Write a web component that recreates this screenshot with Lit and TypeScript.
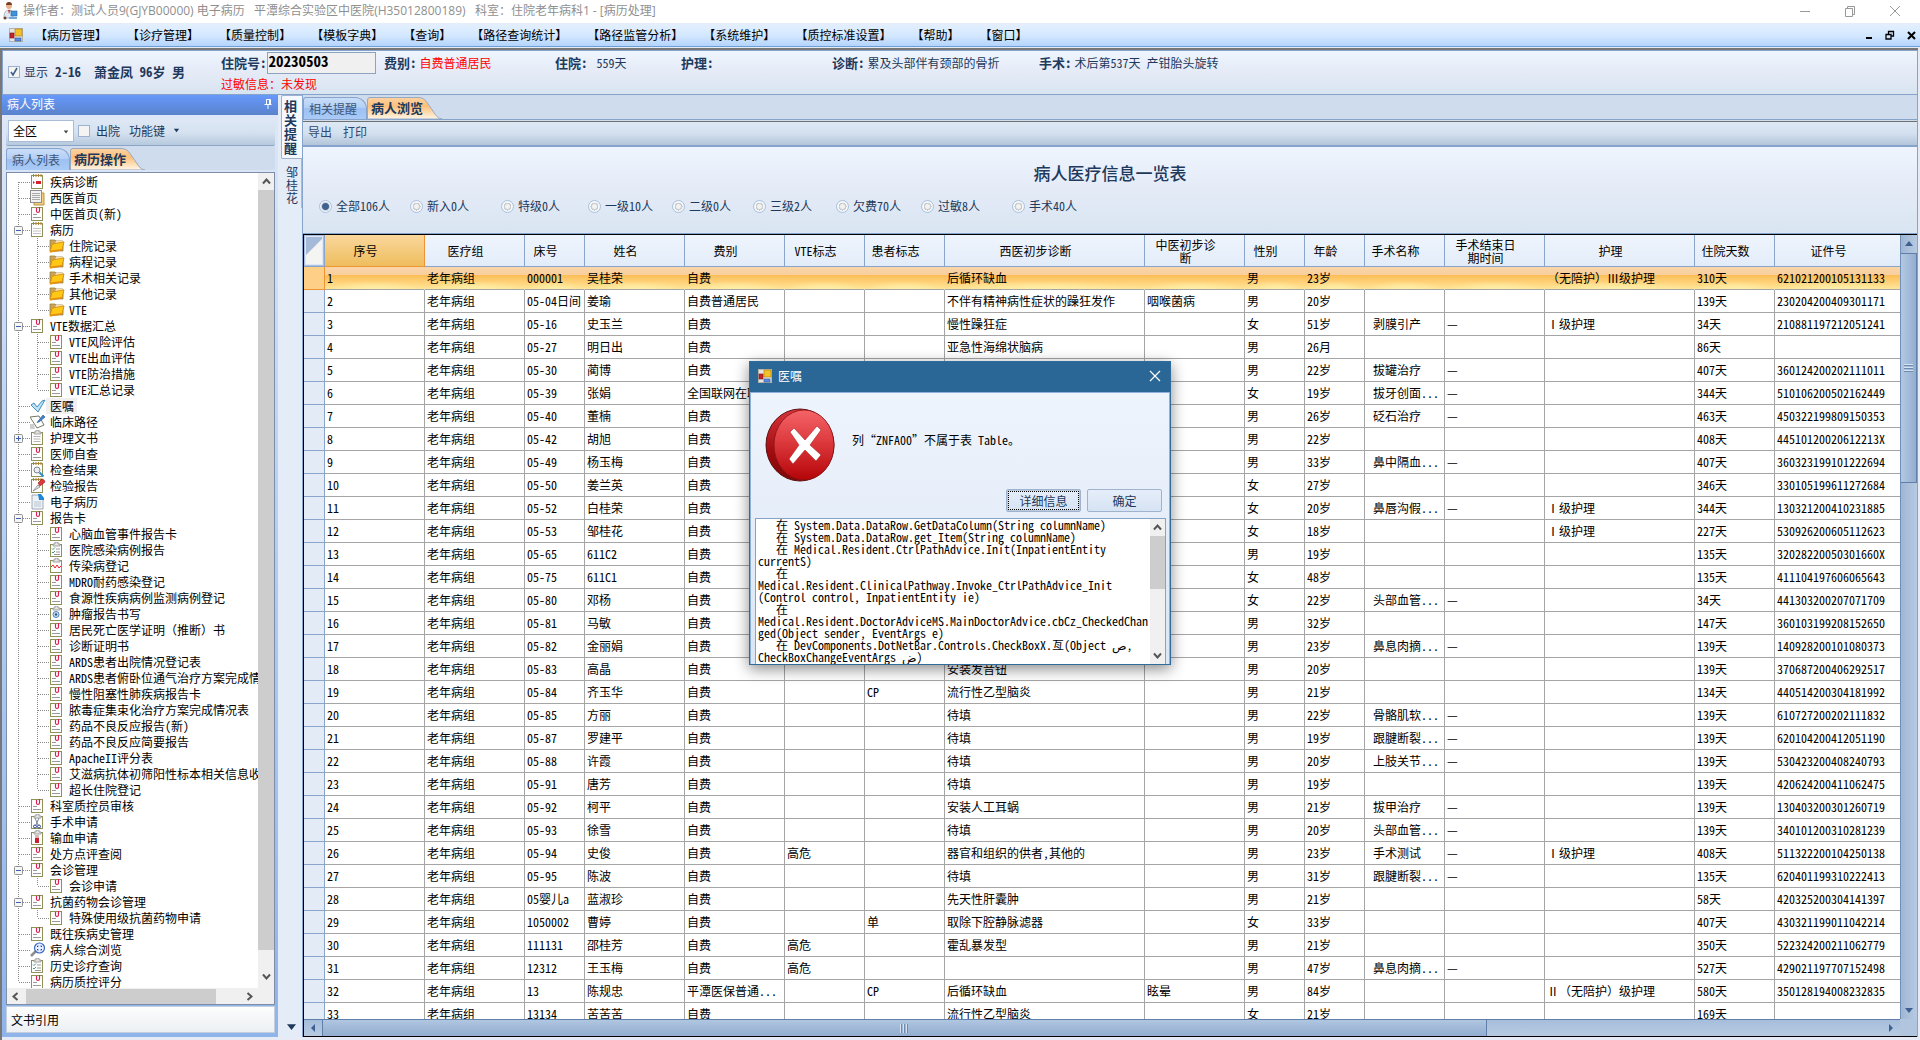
import { LitElement, html, css, svg, nothing } from "lit";
import { customElement, property, state } from "lit/decorators.js";
import { classMap } from "lit/directives/class-map.js";

const base = css`
  * { box-sizing: border-box; }
  button, input, select, textarea {
    font: inherit;
    color: inherit;
    margin: 0;
    padding: 0;
    border: 0;
    border-radius: 0;
    background: none;
    appearance: none;
    font-feature-settings: inherit;
    outline: none;
  }
  ul, h1, h2, p { margin: 0; padding: 0; font: inherit; list-style: none; }
  svg { display: block; flex: none; }
  .wide { font-feature-settings: normal; }
  input[type="radio"] {
    width: 13px;
    height: 13px;
    flex: none;
    border-radius: 50%;
    border: 1px solid #a9c1de;
    background: radial-gradient(circle, #f2f2f0 0 2px, #c9cdd2 3px 4px, #f4f6f8 4px);
  }
  input[type="radio"]:checked {
    background: radial-gradient(circle, #3f6290 0 3px, #c9d3df 4px, #f4f6f8 5px);
  }
`;

/* Full-width punctuation keeps its full advance; plain Latin stays half-width. */
const isWide = (t: string) => /[（）—]/.test(t);

/* ---------- icons ---------- */

const sheet = svg`<rect x="1.5" y="1.5" width="11" height="13" fill="#fff" stroke="#8f9257"/>`;
const board = svg`<rect x="1.5" y="2.5" width="11" height="12" fill="#fff" stroke="#8f9257"/>
  <path d="M4 4V2h2V0h3v2h2v2z" fill="#e4e4e4" stroke="#909090" stroke-width=".8"/>`;
const rings = svg`<path d="M3.5 0v3M6 0v3M8.5 0v3M11 0v3" stroke="#b5812e"/>`;

const icons: Record<string, unknown> = {
  clip: svg`${sheet}<path d="M3 8.500h4M3 11.500h8" stroke="#9a9a9a"/>
    <path d="M6.500 2v3q0 1.500 1.500 1.500t1.500-1.500V1" stroke="#dd1f55" fill="none" stroke-width="1.200"/>`,
  diag: svg`${sheet}${rings}<rect x="6" y="7" width="5" height="3" fill="#d6202c"/><path d="M3 7l2 1.500L3 10z" fill="#d6202c"/>`,
  pages: svg`<path d="M4 3h10v12H4z" fill="#f3cf7c" stroke="#b89545"/><rect x=".5" y=".5" width="11" height="12" fill="#f2f2f2" stroke="#8d8d8d"/>
    <path d="M2 3.500h8M2 5.500h8M2 7.500h8M2 9.500h8" stroke="#a9a9a9"/>`,
  note: svg`${sheet}${rings}<path d="M3 6.500h8M3 9h8M3 11.500h8" stroke="#c4c4c4"/>`,
  folder: svg`<path d="M1 2h5l1 1h7v10H1z" fill="#c9a45a" stroke="#9a8040" stroke-width=".8"/><path d="M7 3h7v3H6z" fill="#f5dfb0"/>
    <path d="M3 6l12-2-2 8-12 2z" fill="#ffc814" stroke="#c98a10" stroke-width=".8"/><path d="M1.500 12.500l11.500-1.500-.5 1.500L1 14.500z" fill="#e89010"/>`,
  check: svg`<path d="M1 7l3-2 3 4 5-6 3-1-7 12z" fill="#bfe2f5" stroke="#3f8fbf"/>`,
  path: svg`<path d="M0 3l9-1 5 9-7 3z" fill="#fff" stroke="#777762"/><path d="M0 10h4l1 5H0z" fill="#cfcfcf"/>
    <path d="M13 1l2 2-6 5-2 .5z" fill="#3f83d6" stroke="#24508c" stroke-width=".6"/>`,
  board: svg`${board}<path d="M3.500 6.500h7M3.500 9h7M3.500 11.500h7" stroke="#b5b5b5"/>`,
  find: svg`${sheet}${rings}<circle cx="7" cy="8" r="3" fill="#e8eef2" stroke="#7e8890"/><path d="M9.500 10.500l4 4" stroke="#2d8fd0" stroke-width="2"/>`,
  pen: svg`${sheet}${rings}<path d="M3 13l5-6 2 2z" fill="#dfe6ea" stroke="#777" stroke-width=".7"/><path d="M8 5l4-4 2 1 1 2-5 4z" fill="#e2383c" stroke="#8e1418" stroke-width=".6"/>`,
  page: svg`<path d="M2 1h7l4 4v10H2z" fill="#eef3f8" stroke="#8a949e" stroke-width=".8"/><path d="M8 0h3l3 4v2H9z" fill="#1f86de"/><path d="M4 8h7M4 10h7M4 12h7" stroke="#aab8c8" stroke-width=".8"/>`,
  list: svg`${board}<path d="M3 6.500l1 1 2-2M3 10l1 1 2-2" stroke="#3f9a80" fill="none"/><path d="M7 7h4M7 10h4M5 12.500h6" stroke="#9a9a9a"/>`,
  chart: svg`${board}<path d="M2 9l2-2 2 3 2-3 2 3 2-2" stroke="#e8202c" fill="none"/>`,
  tumor: svg`${board}<circle cx="7" cy="8.500" r="3" fill="#cfe2f4" stroke="#4a80b8"/><circle cx="7" cy="8.500" r="1.200" fill="#24578f"/>`,
  knife: svg`${board}<path d="M5 4l3 7M9 4l-3 7" stroke="#7c8896"/><circle cx="5" cy="12.500" r="1.500" fill="none" stroke="#2a3d8a"/><circle cx="9" cy="12.500" r="1.500" fill="none" stroke="#2a3d8a"/>`,
  blood: svg`${board}<rect x="5" y="5" width="4" height="3" fill="#d8b8b4"/><rect x="5" y="8" width="4" height="5" fill="#c8202c"/>`,
  lens: svg`<path d="M1 14l5-5" stroke="#8e8e8e" stroke-width="2.500"/><circle cx="9.500" cy="6" r="5" fill="#e6f0ff" stroke="#3a68c0" stroke-width="1.200"/>
    <path d="M7.500 5V4h1M10.500 4h1v1M7.500 7v1h1M10.500 8h1V7" stroke="#2236b8" fill="none"/>`,
};

const icon = (name: string) => svg`<svg width="16" height="16" viewBox="0 0 16 16">${icons[name]}</svg>`;

const formIcon = html`<svg width="14" height="14" viewBox="0 0 14 14">
  <rect x=".5" y=".5" width="13" height="13" fill="#e4e4e4" stroke="#b9b2a6" />
  <rect x="6" y="1" width="7" height="7" fill="#f3c12a" stroke="#a97d10" stroke-width=".6" />
  <rect x="1" y="5" width="4" height="5" fill="#c4262c" stroke="#7c1014" stroke-width=".6" />
  <rect x="6" y="10" width="6" height="3" fill="#5a8ce0" stroke="#2c54a0" stroke-width=".6" />
</svg>`;

const arrow = (d: string, color: string, w = 8, h = 8) =>
  html`<svg width=${w} height=${h} viewBox="0 0 8 8"><path d=${d} fill=${color} /></svg>`;
const chevron = (d: string) =>
  html`<svg width="9" height="9" viewBox="0 0 9 9"><path d=${d} fill="none" stroke="#555" stroke-width="2" /></svg>`;

/* ---------- slanted tab strip ---------- */

@customElement("tab-strip")
class TabStrip extends LitElement {
  @property({ attribute: false }) tabs: string[] = [];
  @state() private current = 1;
  static styles = [base, css`
    :host { display: flex; align-items: flex-end; }
    button { height: 22px; padding: 0 4px 0 5px; text-align: left; color: #3c5577; line-height: 20px; white-space: nowrap; }
    .off {
      width: 64px;
      border: 1px solid #86a3cc;
      border-bottom: 0;
      border-radius: 3px 12px 0 0;
      background: linear-gradient(#c9ddf8, #b4d0f6 45%, #9dc1f2 50%, #a9caf6);
    }
    .on { position: relative; width: 76px; font-size: 13px; font-weight: 700; color: #1e395b; padding-left: 4px; }
    .on svg { position: absolute; inset: 0; }
    .on span { position: relative; }
  `];
  render() {
    return this.tabs.map((t, i) => i === this.current
      ? html`<button class="on" role="tab" aria-selected="true">
          <svg width="76" height="22" viewBox="0 0 76 22">
            <defs><linearGradient id="g" x1="0" y1="0" x2="0" y2="1">
              <stop offset="0" stop-color="#fcd3a3" /><stop offset=".4" stop-color="#fdc07a" />
              <stop offset=".75" stop-color="#fee0b8" /><stop offset="1" stop-color="#fff6ea" />
            </linearGradient></defs>
            <path d="M.5 22V3q0-2.500 2.500-2.500h48q6 0 9 5l9 13q2 3 6 3.500z" fill="url(#g)" stroke="#9aa9bd" />
          </svg><span>${t}</span></button>`
      : html`<button class="off" role="tab" aria-selected="false" @click=${() => (this.current = i)}>${t}</button>`);
  }
}

/* ---------- navigation tree ---------- */

type Node = [icon: string, label: string, children?: Node[], closed?: boolean];
const c = (...labels: string[]): Node[] => labels.map((l) => ["clip", l] as Node);
const f = (...labels: string[]): Node[] => labels.map((l) => ["folder", l] as Node);

const tree: Node[] = [
  ["diag", "疾病诊断"], ["pages", "西医首页"], ["clip", "中医首页(新)"],
  ["note", "病历", f("住院记录", "病程记录", "手术相关记录", "其他记录", "VTE")],
  ["clip", "VTE数据汇总", c("VTE风险评估", "VTE出血评估", "VTE防治措施", "VTE汇总记录")],
  ["check", "医嘱"], ["path", "临床路径"], ["board", "护理文书", [], true], ["clip", "医师自查"],
  ["find", "检查结果"], ["pen", "检验报告"], ["page", "电子病历"],
  ["clip", "报告卡", [
    ...c("心脑血管事件报告卡"), ["list", "医院感染病例报告"], ["chart", "传染病登记"],
    ...c("MDRO耐药感染登记", "食源性疾病病例监测病例登记"), ["tumor", "肿瘤报告书写"],
    ...c("居民死亡医学证明（推断）书", "诊断证明书", "ARDS患者出院情况登记表", "ARDS患者俯卧位通气治疗方案完成情",
      "慢性阻塞性肺疾病报告卡", "脓毒症集束化治疗方案完成情况表", "药品不良反应报告(新)", "药品不良反应简要报告",
      "ApacheII评分表", "艾滋病抗体初筛阳性标本相关信息收", "超长住院登记"),
  ]],
  ["clip", "科室质控员审核"], ["knife", "手术申请"], ["blood", "输血申请"], ["clip", "处方点评查阅"],
  ["clip", "会诊管理", c("会诊申请")], ["clip", "抗菌药物会诊管理", c("特殊使用级抗菌药物申请")],
  ["clip", "既往疾病史管理"], ["lens", "病人综合浏览"], ["list", "历史诊疗查询"], ["clip", "病历质控评分"],
];

const branch = (first: boolean, last: boolean, box = "") => svg`
  <svg width="23" height="16" viewBox="0 0 23 16">
    <path d="M11.5 ${first ? 8 : 0}V${last ? 8 : 16}M12 8.500h11" stroke="#8a8a8a" stroke-dasharray="1 1" fill="none"/>
    ${box ? svg`<rect x="7.500" y="4.500" width="8" height="8" rx="1" fill="#f6f6f6" stroke="#8f8f8f"/>
      <path d=${box === "+" ? "M9 8.500h5M11.500 6v5" : "M9 8.500h5"} stroke="#3a5fae"/>` : nothing}
  </svg>`;
const trunk = svg`<svg width="19" height="16" viewBox="0 0 19 16"><path d="M11.500 0V16" stroke="#8a8a8a" stroke-dasharray="1 1"/></svg>`;

@customElement("record-tree")
class RecordTree extends LitElement {
  static styles = [base, css`
    :host { display: grid; grid-template: minmax(0, 1fr) 16px / minmax(0, 1fr) 16px; border: 1px solid #7d8ea6; background: #fff; overflow: hidden; }
    .list { overflow: hidden; padding-top: 1px; color: #000; line-height: 16px; white-space: nowrap; }
    .row { display: flex; height: 16px; }
    .row span { padding: 0 3px 0 4px; }
    .sel { background: #f0f0f0; }
    .v { display: flex; flex-direction: column; align-items: center; background: #f0f0f0; padding-bottom: 3px; }
    .v div { width: 100%; flex: 1; background: #cdcdcd; margin-bottom: 18px; }
    .v svg { margin: 4px 0; }
    .h { display: flex; align-items: center; background: #f0f0f0; padding-left: 4px; }
    .h div { width: 190px; height: 15px; margin: 0 auto 0 2px; background: #cdcdcd; }
    .end { background: #f0f0f0; }
    .h svg { margin-right: 4px; }
  `];
  private rows(nodes: Node[], deep = false): unknown {
    return nodes.map(([ic, label, kids, closed], i) => html`<li>
      <div class="row">${deep ? trunk : nothing}${branch(!deep && i === 0, i === nodes.length - 1, kids ? (closed ? "+" : "-") : "")}
        ${icon(ic)}<span class=${classMap({ sel: label === "医嘱", wide: isWide(label) })}>${label}</span></div>
      ${kids?.length ? html`<ul>${this.rows(kids, true)}</ul>` : nothing}
    </li>`);
  }
  render() {
    return html`<ul class="list">${this.rows(tree)}</ul>
      <div class="v">${chevron("M1 6.500l3.500-4 3.500 4")}<div></div>${chevron("M1 2.500l3.500 4 3.500-4")}</div>
      <div class="h">${chevron("M6.500 1l-4 3.500 4 3.500")}<div></div>${chevron("M2.500 1l4 3.500-4 3.500")}</div>
      <div class="end"></div>`;
  }
}

/* ---------- patient grid ---------- */

const columns: [string, number][] = [
  ["序号", 100], ["医疗组", 100], ["床号", 60], ["姓名", 100], ["费别", 100], ["VTE标志", 80], ["患者标志", 80],
  ["西医初步诊断", 200], ["中医初步诊断", 100], ["性别", 60], ["年龄", 60], ["手术名称", 80], ["手术结束日期时间", 100],
  ["护理", 150], ["住院天数", 80], ["证件号", 0],
];

/* bed | name | fee | VTE | flag | western | tcm | sex | age | operation | nursing | days | id */
const patients = `
000001|吴桂荣|自费|||后循环缺血||男|23岁||（无陪护）Ⅲ级护理|310天|621021200105131133
05-04日间|姜瑜|自费普通居民|||不伴有精神病性症状的躁狂发作|咽喉菌病|男|20岁|||139天|230204200409301171
05-16|史玉兰|自费|||慢性躁狂症||女|51岁|剥膜引产|Ⅰ级护理|34天|210881197212051241
05-27|明日出|自费|||亚急性海绵状脑病||男|26月|||86天|
05-30|蔺博|自费|||||男|22岁|拔罐治疗||407天|360124200202111011
05-39|张娟|全国联网在职|||||女|19岁|拔牙创面...||344天|510106200502162449
05-40|董楠|自费|||||男|26岁|砭石治疗||463天|450322199809150353
05-42|胡旭|自费|||||男|22岁|||408天|44510120020612213X
05-49|杨玉梅|自费|||||男|33岁|鼻中隔血...||407天|360323199101222694
05-50|姜兰英|自费|||||女|27岁|||346天|330105199611272684
05-52|白桂荣|自费|||||女|20岁|鼻唇沟假...|Ⅰ级护理|344天|130321200410231885
05-53|邹桂花|自费|||||女|18岁||Ⅰ级护理|227天|530926200605112623
05-65|611C2|自费|||||男|19岁|||135天|32028220050301660X
05-75|611C1|自费|||||女|48岁|||135天|411104197606065643
05-80|邓杨|自费|||||女|22岁|头部血管...||34天|441303200207071709
05-81|马敏|自费|||||男|32岁|||147天|360103199208152650
05-82|金丽娟|自费|||||男|23岁|鼻息肉摘...||139天|140928200101080373
05-83|高晶|自费|||安装发音钮||男|20岁|||139天|370687200406292517
05-84|齐玉华|自费||CP|流行性乙型脑炎||男|21岁|||134天|440514200304181992
05-85|方丽|自费|||待填||男|22岁|骨骼肌软...||139天|610727200202111832
05-87|罗建平|自费|||待填||男|19岁|跟腱断裂...||139天|620104200412051190
05-88|许霞|自费|||待填||男|20岁|上肢关节...||139天|530423200408240793
05-91|唐芳|自费|||待填||男|19岁|||139天|420624200411062475
05-92|柯平|自费|||安装人工耳蜗||男|21岁|拔甲治疗||139天|130403200301260719
05-93|徐雪|自费|||待填||男|20岁|头部血管...||139天|340101200310281239
05-94|史俊|自费|高危||器官和组织的供者,其他的||男|23岁|手术测试|Ⅰ级护理|408天|511322200104250138
05-95|陈波|自费|||待填||男|31岁|跟腱断裂...||135天|620401199310222413
05婴儿a|蓝淑珍|自费|||先天性肝囊肿||男|21岁|||58天|420325200304141397
1050002|曹婷|自费||单|取除下腔静脉滤器||女|33岁|||407天|430321199011042214
111131|邵桂芳|自费|高危||霍乱暴发型||男|21岁|||350天|522324200211062779
12312|王玉梅|自费|高危||||男|47岁|鼻息肉摘...||527天|429021197707152498
13|陈规忠|平潭医保普通...||CP|后循环缺血|眩晕|男|84岁||Ⅱ（无陪护）级护理|580天|350128194008232835
13134|苦苦苦|自费|||流行性乙型脑炎||女|21岁|||169天|`
  .trim().split("\n").map((l) => l.split("|"));

@customElement("patient-grid")
class PatientGrid extends LitElement {
  static styles = [base, css`
    :host { display: grid; grid-template: minmax(0, 1fr) 17px / minmax(0, 1fr) 17px; border: 1px solid #000; border-right: 0; overflow: hidden; background: #fff; color: #000; }
    .view { overflow: hidden; }
    table { width: 100%; table-layout: fixed; border-collapse: separate; border-spacing: 0; line-height: 14px; }
    col.mark { width: 21px; }
    th { height: 32px; padding: 0 18px 0 0; font-weight: 400; line-height: 13px; white-space: nowrap;
      border-right: 1px solid #8aa5cb; border-bottom: 1px solid #8aa5cb; background: linear-gradient(#eff5fd, #e2ecf9); }
    th.sorted { background: linear-gradient(#f9d79c, #eebd5d); border-color: #ef9432; }
    th.corner { padding: 0; background: #a9bfdd; }
    td { height: 23px; padding: 0 0 0 2px; white-space: nowrap; overflow: hidden; border-right: 1px solid #a5a5a5; border-bottom: 1px solid #a5a5a5; }
    td:first-child { background: #e3ebf7; border-color: #8aa5cb; padding: 0; }
    td:last-child, th:last-child { border-right: 0; }
    td.op { padding-left: 8px; }
    .cur td {
      border-right-color: transparent;
      background-clip: border-box;
      background: radial-gradient(ellipse 50% 8px at 50% 100%, #fff0a8, #ffe99a00),
        linear-gradient(#f9d5a8, #f9cf9e 36%, #fcbd57 38%, #ffd27a 70%, #ffe596);
    }
    .cur td:first-child { background: #fdcf87; border-color: #ef9432; }
    .v { display: flex; flex-direction: column; align-items: center; background: linear-gradient(90deg, #9fb6d4, #b7cae2); border-left: 1px solid #6f8fb8; }
    .v svg { margin: 5px 0; }
    .vt { width: 100%; height: 230px; margin-bottom: auto; border: 1px solid #5f7fa8; border-left: 0; background: linear-gradient(90deg, #b3c8e2, #93aed0); display: flex; justify-content: center; align-items: center; }
    .h { display: flex; align-items: center; background: linear-gradient(#a6bedb, #b7cae2); border-top: 1px solid #5f7fa8; }
    .h svg { margin: 0 5px; }
    .ht { width: 73%; height: 100%; margin-right: auto; border-right: 1px solid #5f7fa8; border-left: 1px solid #5f7fa8; background: linear-gradient(#b0c6e1, #92adcf); display: flex; justify-content: center; align-items: center; }
    .grip { width: 9px; height: 9px; background: repeating-linear-gradient(#d7e2f0 0 1px, #6f8bb0 1px 2px, transparent 2px 3px); }
    .ht .grip { background: repeating-linear-gradient(90deg, #d7e2f0 0 1px, #6f8bb0 1px 2px, transparent 2px 3px); }
    .end { background: #b1c5de; }
  `];
  render() {
    return html`<div class="view"><table>
        <colgroup><col class="mark" />${columns.map(([, w]) => html`<col style=${w ? `width:${w}px` : ""} />`)}</colgroup>
        <thead><tr><th class="corner"><svg width="20" height="31" viewBox="0 0 20 31">
            <rect x="1.500" y="1.500" width="17" height="28" fill="#a5bad8" stroke="#dfe8f4" /><path d="M18 4v25H2V20z" fill="#f4f4f2" /></svg></th>
          ${columns.map(([t], i) => html`<th class=${classMap({ sorted: i === 0 })} scope="col">${i === 8 || i === 12 ? html`${t.slice(0, 5)}<br />${t.slice(5)}` : t}</th>`)}
        </tr></thead>
        <tbody>${patients.map((p, i) => html`<tr class=${classMap({ cur: i === 0 })}>
          <td></td><td>${i + 1}</td><td>老年病组</td>${p.slice(0, 9).map((v) => html`<td>${v}</td>`)}
          <td class="op">${p[9]}</td><td class="wide">${p[9] ? "—" : ""}</td><td class="wide">${p[10]}</td>${p.slice(11).map((v) => html`<td>${v}</td>`)}
        </tr>`)}</tbody>
      </table></div>
      <div class="v">${arrow("M0 6h8L4 1z", "#3f5f92")}<div class="vt"><div class="grip"></div></div>${arrow("M0 2h8L4 7z", "#3f5f92")}</div>
      <div class="h">${arrow("M6 0v8L2 4z", "#3f5f92")}<div class="ht"><div class="grip"></div></div>${arrow("M2 0v8l4-4z", "#3f5f92")}</div>
      <div class="end"></div>`;
  }
}

/* ---------- error dialog ---------- */

const trace = [
  "   在 System.Data.DataRow.GetDataColumn(String columnName)",
  "   在 System.Data.DataRow.get_Item(String columnName)",
  "   在 Medical.Resident.CtrlPathAdvice.Init(InpatientEntity",
  "currentS)",
  "   在",
  "Medical.Resident.ClinicalPathway.Invoke_CtrlPathAdvice_Init",
  "(Control control, InpatientEntity ie)",
  "   在",
  "Medical.Resident.DoctorAdviceMS.MainDoctorAdvice.cbCz_CheckedChan",
  "ged(Object sender, EventArgs e)",
  "   在 DevComponents.DotNetBar.Controls.CheckBoxX.亙(Object ص,",
  "CheckBoxChangeEventArgs ض)",
].join("\n");

@customElement("error-dialog")
class ErrorDialog extends LitElement {
  static styles = [base, css`
    :host { display: flex; flex-direction: column; width: 422px; height: 304px; border: 1px solid #2f6c9c; background: linear-gradient(#f0f6fe, #e4ecf8 60%, #dbe6f4); box-shadow: 0 4px 14px #0007; color: #000; }
    header { display: flex; align-items: center; gap: 6px; height: 30px; padding: 0 8px 2px; background: #2a6796; color: #fff; }
    header h2 { flex: 1; }
    .body { flex: 1; display: flex; flex-direction: column; border: solid #8fb0d8; border-width: 1px 1px 0; padding: 0 3px 0 4px; }
    .msg { display: flex; align-items: center; gap: 16px; height: 96px; padding: 7px 0 0 9px; }
    .msg p { padding-bottom: 10px; }
    .buttons { display: flex; justify-content: flex-end; gap: 6px; padding: 0 4px 6px; }
    .buttons button { width: 75px; height: 23px; border: 1px solid #9fb3cf; border-radius: 2px; background: linear-gradient(#e6eefa, #d6e3f3); color: #1e395b; line-height: 19px; }
    .buttons .focus { border-width: 1px; box-shadow: inset 0 0 0 1px #b9c9de; outline: 1px dotted #000; outline-offset: -3px; }
    .trace { flex: 1; display: flex; min-height: 0; border: 1px solid #86a2c6; border-bottom: 0; background: #fff; }
    textarea { flex: 1; min-width: 0; resize: none; overflow: hidden; white-space: pre; padding: 0 0 0 2px; line-height: 12px; }
    .bar { width: 15px; display: flex; flex-direction: column; align-items: center; justify-content: space-between; background: #f0f0f0; padding: 4px 0; }
    .bar div { width: 15px; height: 53px; margin: 4px 0 auto; background: #cdcdcd; }
  `];
  render() {
    return html`
      <header>${formIcon}<h2>医嘱</h2><button aria-label="关闭"><svg width="14" height="14" viewBox="0 0 14 14"><path d="M2 2l10 10M12 2L2 12" stroke="#fff" stroke-width="1.200" /></svg></button></header>
      <div class="body">
        <div class="msg">
          <svg width="72" height="76" viewBox="0 0 72 76">
            <defs>
              <linearGradient id="rim" x1="0" y1="0" x2="0" y2="1"><stop offset="0" stop-color="#d8343a" /><stop offset=".6" stop-color="#a00c10" /><stop offset="1" stop-color="#7c0808" /></linearGradient>
              <linearGradient id="face" x1="0" y1="0" x2="0" y2="1"><stop offset="0" stop-color="#f46468" /><stop offset=".45" stop-color="#dd3a3e" /><stop offset="1" stop-color="#b40408" /></linearGradient>
            </defs>
            <ellipse cx="36" cy="38" rx="34" ry="36" fill="url(#rim)" stroke="#5c1010" />
            <ellipse cx="40" cy="38" rx="30" ry="35" fill="url(#face)" stroke="#8c1216" stroke-width=".8" />
            <path d="M30 21l11 12 12-14 4 4-11 15 11 10-5 6-11-11-12 14-4-5 10-14-9-13z" fill="#fff" stroke="#b02024" stroke-width=".6" />
          </svg>
          <p>列“ZNFA00”不属于表 Table。</p>
        </div>
        <div class="buttons"><button class="focus">详细信息</button><button>确定</button></div>
        <div class="trace"><textarea readonly aria-label="详细信息" .value=${trace}></textarea>
          <div class="bar">${chevron("M1 6.500l3.500-4 3.500 4")}<div></div>${chevron("M1 2.500l3.500 4 3.500-4")}</div></div>
      </div>`;
  }
}

/* ---------- application ---------- */

const menus = ["病历管理", "诊疗管理", "质量控制", "模板字典", "查询", "路径查询统计", "路径监管分析", "系统维护", "质控标准设置", "帮助", "窗口"];
const filters = ["全部106人", "新入0人", "特级0人", "一级10人", "二级0人", "三级2人", "欠费70人", "过敏8人", "手术40人"];

@customElement("app-root")
class AppRoot extends LitElement {
  static styles = [base, css`
    :host {
      display: flex; flex-direction: column; position: relative; height: 100vh; min-width: 1200px; overflow: hidden;
      background: #e6ebf5; color: #1e395b;
      font: 12px/16px "Noto Sans CJK SC", "DejaVu Sans", sans-serif;
      font-feature-settings: "hwid";
    }
    .title { display: flex; align-items: center; gap: 5px; height: 23px; padding: 0 19px 1px 2px; background: #fff; color: #8f8f8f; font-family: "Open Sans", "Noto Sans CJK SC", sans-serif; font-feature-settings: normal; }
    .title h1 { flex: 1; white-space: pre; }
    .title .wins { display: flex; gap: 33px; }
    .menu { display: flex; align-items: center; height: 24px; padding: 0 4px 0 9px; background: linear-gradient(#e6edfa, #dfeeff 20%, #d3e7ff 55%, #b4d4fd); border-bottom: 1px solid #6c9fd6; color: #000; }
    .menu nav { flex: 1; display: flex; padding-left: 2px; }
    .menu nav button { padding: 0 10px; }
    .mdi { display: flex; gap: 12px; align-items: center; }
    .client { flex: 1; min-height: 0; display: flex; flex-direction: column; padding-bottom: 3px; margin: 1px 2px 0 0; border: solid #777; border-width: 2px 0 0 2px; }

    .info { display: grid; grid-template-columns: 218px 163px 171px 126px 151px 207px 1fr; grid-template-rows: 23px 19px; align-content: start; align-items: center; height: 45px; border: 1px solid #86a3cc; background: linear-gradient(#eef5fd, #e4ebf7 50%, #d9e4f1); white-space: nowrap; }
    .who { grid-row: 1 / 3; display: flex; align-items: center; padding: 0 0 0 5px; font-size: 13px; font-weight: 700; gap: 13px; }
    .who label { display: flex; align-items: center; gap: 4px; font-size: 12px; font-weight: 400; margin-right: -6px; }
    .who .rest { white-space: pre; }
    .f { display: flex; align-items: center; gap: 3px; }
    .f span { white-space: pre; }
    .f b, .f label { font-size: 13px; font-weight: 700; }
    .f input { width: 109px; height: 22px; margin-left: -3px; padding: 0 1px 4px; border: 1px solid #8ea3c2; background: #f0f0f0; color: #000; font-size: 15px; font-weight: 700; }
    .red { color: #f00; }
    input[type="checkbox"] { width: 12px; height: 12px; border: 1px solid #9db2cf; background: #f4f4f2; }
    .tick { position: relative; display: flex; }
    .tick svg { position: absolute; inset: 1px; }

    .work { flex: 1; min-height: 0; display: flex; }
    .side { width: 276px; display: flex; flex-direction: column; background: linear-gradient(#dfe8f7, #b9d2f7 40%, #8fb4ea); }
    .side header { display: flex; align-items: center; justify-content: space-between; height: 20px; padding: 0 5px 2px; background: linear-gradient(#6699fb, #5a82cc); color: #fff; }
    .pad { flex: 1; min-height: 0; display: flex; flex-direction: column; padding: 3px 3px 2px 4px; }
    .tools { display: flex; align-items: center; height: 28px; padding: 0 2px 2px; border-bottom: 1px solid #8ca5c6; border-radius: 2px; background: linear-gradient(#dfe9f6, #d5e1ef 55%, #b6c9de); }
    .pick { position: relative; }
    .pick select { width: 66px; height: 22px; padding: 0 4px; border: 1px solid #a9bdd8; background: #fff; color: #000; }
    .pick svg { position: absolute; right: 5px; top: 9px; }
    .tools label { display: flex; align-items: center; gap: 6px; margin: 0 9px 0 4px; }
    .tools button { display: flex; align-items: center; gap: 8px; }
    .stabs { height: 24px; background: #cfdcee; }
    record-tree { flex: 1; min-height: 0; margin-top: 2px; }
    .quote { height: 27px; padding: 0 4px; border: 1px solid #c3cfdf; background: linear-gradient(#fdfdfd, #eceff3); color: #000; text-align: left; margin: 1px 0 2px; }

    .vtabs { width: 25px; display: flex; flex-direction: column; align-items: flex-end; padding-left: 4px; background: #e4ecf8; border-right: 1px solid #86a3cc; }
    .vtabs button { width: 19px; line-height: 13px; padding: 6px 3px 4px; text-align: center; border-right: 1px solid #a8bcd8; }
    .vtabs .on { width: 21px; height: 64px; padding: 0 5px 0 2px; font-size: 13px; line-height: 14px; font-weight: 700; border: 1px solid #9fb3d0; border-right: 0; background: #f5f9ff; border-radius: 2px 0 0 2px; }
    .vtabs svg { margin: auto 6px 6px; }

    main { flex: 1; min-width: 0; display: flex; flex-direction: column; background: #cfdcee; border-right: 1px solid #86a3cc; }
    .mtabs { height: 25px; border-bottom: 1px solid #86a3cc; }
    .bar { display: flex; align-items: flex-start; gap: 11px; height: 26px; padding: 2px 5px; margin-top: 1px; border-top: 1px solid #707070; border-bottom: 2px solid #86a3cc; background: linear-gradient(#dde8f5, #d3e0ef 50%, #b3c5da); color: #33496b; }
    .head { height: 87px; padding: 14px 0 0; background: linear-gradient(#eef5fe, #e4ebf7 50%, #d9e5f2); border-bottom: 1px solid #86a3cc; }
    .head h2 { font-size: 17px; line-height: 24px; font-weight: 500; text-align: center; }
    .radios { display: grid; grid-template-columns: 91px 91px 87px 84px 81px 83px 85px 91px auto; justify-content: start; padding: 13px 0 0 16px; }
    .radios label { display: flex; align-items: center; gap: 4px; }
    patient-grid { flex: 1; min-height: 0; }
    .overlay { position: absolute; inset: 0 0 14px; display: flex; align-items: center; justify-content: center; }
  `];

  private field(label: string, value: string, red = false) {
    return html`<div class="f"><b>${label}:</b><span class=${classMap({ red })}>${value}</span></div>`;
  }

  render() {
    return html`
      <div class="title">
        <svg width="16" height="18" viewBox="0 0 16 18">
          <circle cx="7" cy="4" r="3" fill="#e8b48e" /><path d="M4 3q0-3 3-3t3 3z" fill="#7a3d22" />
          <path d="M2 15q0-7 5-7 4 0 5 5l-2 3H2z" fill="#dfe8f2" stroke="#8497ad" stroke-width=".6" />
          <path d="M6 8l1 4 1.500-4z" fill="#c43a3a" /><rect x="9" y="9" width="6" height="5" fill="#3f93dc" stroke="#27639c" stroke-width=".6" />
          <path d="M7 15h8v2H7z" fill="#6aa8dd" /><circle cx="3" cy="16" r="1.500" fill="#6d4434" />
        </svg>
        <h1>操作者：测试人员9(GJYB00000) 电子病历   平潭综合实验区中医院(H35012800189)   科室：住院老年病科1 - [病历处理]</h1>
        <div class="wins">
          <svg width="12" height="12" viewBox="0 0 12 12"><path d="M1 6.500h10" stroke="#999" /></svg>
          <svg width="12" height="12" viewBox="0 0 12 12"><path d="M1.500 3.500h7v8h-7zM3.500 3V1.500h7v8H9" fill="none" stroke="#999" /></svg>
          <svg width="12" height="12" viewBox="0 0 12 12"><path d="M1 1l10 10M11 1L1 11" stroke="#999" /></svg>
        </div>
      </div>
      <div class="menu">${formIcon}
        <nav>${menus.map((m) => html`<button>【${m}】</button>`)}</nav>
        <div class="mdi">
          <svg width="9" height="10" viewBox="0 0 9 10"><path d="M2 8h6" stroke="#000" stroke-width="2" /></svg>
          <svg width="10" height="10" viewBox="0 0 10 10"><path d="M1 4.500h5v4.500H1zM3.500 4V1.500h5V6H6M3 1.500h6M.5 4.500h6" fill="none" stroke="#000" stroke-width="1.300" /></svg>
          <svg width="9" height="10" viewBox="0 0 9 10"><path d="M1 2l7 7M8 2L1 9" stroke="#000" stroke-width="2" /></svg>
        </div>
      </div>
      <div class="client">
        <section class="info">
          <div class="who">
            <label><span class="tick"><input type="checkbox" checked /><svg width="10" height="10" viewBox="0 0 10 10"><path d="M2 5l2 3 4-7" fill="none" stroke="#3f5f8c" stroke-width="1.600" /></svg></span>显示</label>
            <span>2-16</span><span class="rest">萧金凤 96岁 男</span>
          </div>
          <div class="f"><label for="no">住院号:</label><input id="no" value="20230503" /></div>
          ${this.field("费别", "自费普通居民", true)}${this.field("住院", " 559天")}${this.field("护理", "")}
          ${this.field("诊断", "累及头部伴有颈部的骨折")}
          ${this.field("手术", "术后第537天 产钳胎头旋转")}
          <div class="red">过敏信息：未发现</div>
        </section>
        <div class="work">
          <aside class="side">
            <header><span>病人列表</span>
              <svg width="10" height="12" viewBox="0 0 10 12"><path d="M3.500 1.500h4v5h-4zM1.500 6.500h7M5 7v4M6.500 2v4" fill="none" stroke="#fff" /></svg></header>
            <div class="pad">
              <div class="tools">
                <div class="pick"><select aria-label="病区"><option>全区</option></select>${arrow("M1 2h6L4 6z", "#444", 6, 6)}</div>
                <label><input type="checkbox" />出院</label>
                <button>功能键 ${arrow("M1 2h6L4 6z", "#1e395b", 7, 7)}</button>
              </div>
              <tab-strip class="stabs" .tabs=${["病人列表", "病历操作"]}></tab-strip>
              <record-tree></record-tree>
              <button class="quote">文书引用</button>
            </div>
          </aside>
          <div class="vtabs"><button class="on">相关提醒</button><button>邹桂花</button>${arrow("M0 2h8L4 7z", "#1e395b", 9, 9)}</div>
          <main>
            <tab-strip class="mtabs" .tabs=${["相关提醒", "病人浏览"]}></tab-strip>
            <div class="bar"><button>导出</button><button>打印</button></div>
            <section class="head">
              <h2>病人医疗信息一览表</h2>
              <div class="radios">${filters.map((t, i) => html`<label><input type="radio" name="scope" ?checked=${i === 0} />${t}</label>`)}</div>
            </section>
            <patient-grid></patient-grid>
          </main>
        </div>
      </div>
      <div class="overlay"><error-dialog role="dialog" aria-label="医嘱"></error-dialog></div>`;
  }
}
